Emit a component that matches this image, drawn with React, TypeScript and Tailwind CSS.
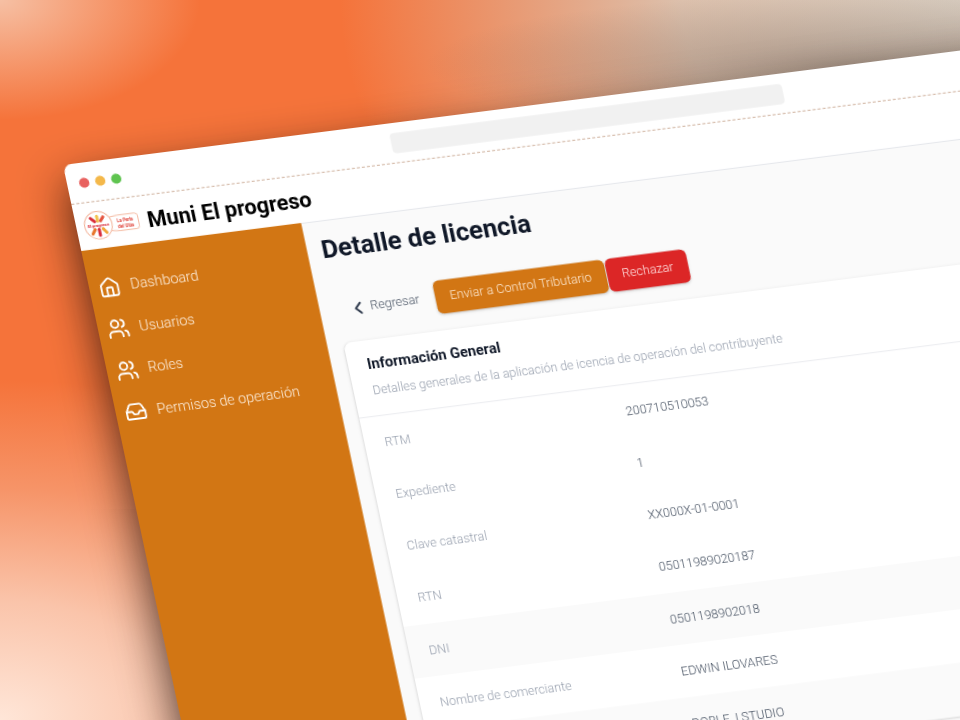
import { ChevronLeft, House, Inbox, Users } from "lucide-react";

const menu = [
  { label: "Dashboard", icon: House },
  { label: "Usuarios", icon: Users },
  { label: "Roles", icon: Users },
  { label: "Permisos de operación", icon: Inbox },
];

const rows = [
  { label: "RTM", value: "200710510053" },
  { label: "Expediente", value: "1" },
  { label: "Clave catastral", value: "XX000X-01-0001" },
  { label: "RTN", value: "05011989020187" },
  { label: "DNI", value: "0501198902018", gray: true },
  { label: "Nombre de comerciante", value: "EDWIN ILOVARES" },
  { label: "Nombre comercial", value: "DOBLE, I STUDIO", gray: true },
];

const Logo = () => (
  <svg viewBox="0 0 56 30" className="w-14 h-[30px]">
    <path
      d="M27 8.5 L35 7.5 H52 Q55 7.5 55 10.5 V20 Q55 23 52 23 H35 L27 22"
      fill="#fff"
      stroke="#f3b49a"
      strokeWidth="0.9"
    />
    <circle cx="15" cy="15" r="13.6" fill="#fff" stroke="#f3b49a" strokeWidth="1" />
    <g strokeWidth="3" strokeLinecap="round">
      <path d="M15 11 V6" stroke="#f2c14e" />
      <path d="M12 11 L8.5 7.5" stroke="#d92d3a" />
      <path d="M18 11 L21 7.5" stroke="#e5533d" />
      <path d="M11 19 L8 23" stroke="#e8762d" />
      <path d="M15 19 V25" stroke="#d92d3a" />
      <path d="M19 19 L22 23" stroke="#f2a63c" />
    </g>
    <text x="15" y="16.5" fontSize="4.2" fontWeight="700" textAnchor="middle" fill="#d8232f">
      El progreso
    </text>
    <text x="42" y="14.5" fontSize="4.4" fontWeight="700" textAnchor="middle" fill="#e0433a">
      La Perla
    </text>
    <text x="42" y="20" fontSize="4.4" fontWeight="700" textAnchor="middle" fill="#e0433a">
      del Ulúa
    </text>
  </svg>
);

export default function App() {
  return (
    <div className="relative w-[960px] h-[720px] overflow-hidden font-['Roboto',sans-serif] bg-[#f5733a]">
      <div className="absolute inset-0 bg-[radial-gradient(ellipse_420px_70px_at_88%_9%,rgba(110,95,85,0.4)_0%,rgba(110,95,85,0)_100%),radial-gradient(ellipse_520px_340px_at_0%_100%,#ffe6d8_0%,#fac4aa_35%,#f69468_68%,rgba(245,115,58,0)_100%),radial-gradient(ellipse_200px_120px_at_0%_0%,#f6c0a4_0%,rgba(245,115,58,0)_100%),radial-gradient(ellipse_620px_420px_at_100%_0%,#d6cabd_0%,#dcc0ac_45%,rgba(245,115,58,0)_100%)]" />

      {/* browser window */}
      <div className="absolute left-0 top-0 w-[1200px] h-[900px] origin-top-left [transform:matrix(1,-0.1276,0.2125,1,63,165)] bg-white rounded-t-lg shadow-[0_20px_45px_rgba(25,12,6,0.8)] flex flex-col blur-[0.35px]">
        <div className="h-10 shrink-0 flex items-center pl-3 border-b border-dashed border-[#d8c0b0]">
          <div className="flex gap-1.5">
            <div className="w-2.5 h-2.5 rounded-full bg-[#e8615f]" />
            <div className="w-2.5 h-2.5 rounded-full bg-[#f4b84a]" />
            <div className="w-2.5 h-2.5 rounded-full bg-[#5fc450]" />
          </div>
          <div className="ml-[270px] w-[392px] h-5 rounded bg-[#f1f1f1]" />
        </div>

        <div className="h-[46px] shrink-0 flex items-center gap-2 pl-[7px]">
          <Logo />
          <div className="text-[21.5px] font-bold text-black pt-0.5">Muni El progreso</div>
        </div>

        <div className="flex flex-1">
          <div className="w-[220px] shrink-0 bg-[#d27614] pt-[18px]">
            {menu.map((item) => (
              <div key={item.label} className="h-[41.5px] flex items-center gap-2.5 pl-[9px] text-[#fdeedd]">
                <item.icon size={22} className="text-white" strokeWidth={2} />
                <span className="text-[14.2px] font-light">{item.label}</span>
              </div>
            ))}
          </div>

          <div className="flex-1 bg-[#fafafa] border-t border-gray-200 pl-4">
            <div className="text-[25.5px] font-bold text-gray-900 pt-[11px] leading-8 -ml-0.5">Detalle de licencia</div>
            <div className="flex items-center mt-[29px] pl-[12px]">
              <ChevronLeft size={20} strokeWidth={2.4} className="text-gray-700" />
              <span className="text-[12.5px] font-light text-gray-600 ml-[2px] w-[65px]">Regresar</span>
              <button className="h-[33px] w-[171px] rounded-md bg-[#d27614] text-[12.5px] font-light text-[#fde8d0] shadow">
                Enviar a Control Tributario
              </button>
              <button className="h-[33px] w-[81px] ml-px rounded-md bg-[#dc2626] text-[12.5px] font-light text-red-100 shadow">
                Rechazar
              </button>
            </div>

            <div className="mt-[16px] bg-white rounded-lg shadow">
              <div className="h-[76px] px-[19px] pt-[15px] border-b border-gray-200">
                <div className="text-[14.5px] font-bold text-gray-900 leading-5">Información General</div>
                <div className="text-[12.3px] font-light text-gray-400 leading-5 mt-[5px]">
                  Detalles generales de la aplicación de icencia de operación del contribuyente
                </div>
              </div>
              {rows.map((row) => (
                <div
                  key={row.label}
                  className={`h-[52px] flex items-center pl-5 text-[12.4px] font-light ${row.gray ? "bg-[#fafafa]" : "bg-white"}`}
                >
                  <div className="w-[241px] text-gray-400">{row.label}</div>
                  <div className="text-gray-600">{row.value}</div>
                </div>
              ))}
            </div>
          </div>
        </div>
      </div>
    </div>
  );
}
